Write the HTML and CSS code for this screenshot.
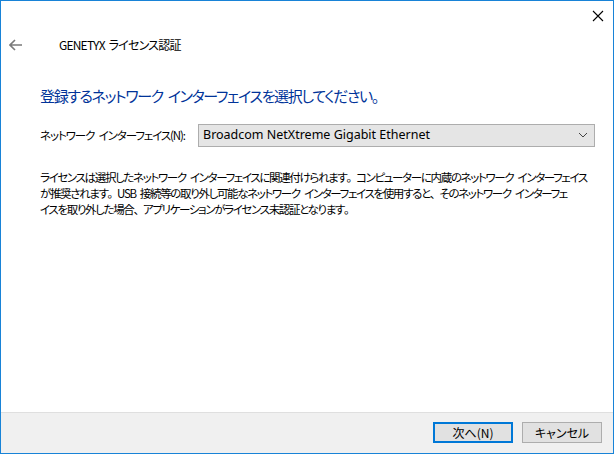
FILE: index.html
```html
<!DOCTYPE html>
<html lang="ja">
<head>
<meta charset="utf-8">
<title>GENETYX ライセンス認証</title>
<link rel="stylesheet" href="styles.css">
</head>
<body>
<div class="window">
  <div class="titlebar">
    <span class="close" aria-label="閉じる">
      <svg width="12" height="12" viewBox="0 0 12 12"><path d="M1 1 L11 11 M11 1 L1 11" stroke="#000" stroke-width="1.1" fill="none"/></svg>
    </span>
  </div>
  <div class="header">
    <span class="back">
      <svg width="14" height="12" viewBox="0 0 14 12"><path d="M1 6 H13 M6 1 L1 6 L6 11" stroke="#7a7a7a" stroke-width="1.6" fill="none"/></svg>
    </span>
    <span class="apptitle">GENETYX ライセンス認証</span>
  </div>
  <div class="content">
    <h1 class="instruction">登録するネットワーク インターフェイスを選択してください。</h1>
    <div class="field">
      <label class="field-label">ネットワーク インターフェイス(N):</label>
      <div class="combo">
        <span class="combo-text">Broadcom NetXtreme Gigabit Ethernet</span>
        <svg class="chev" width="10" height="6" viewBox="0 0 10 6"><path d="M1 1 L5 5 L9 1" stroke="#444" stroke-width="1" fill="none"/></svg>
      </div>
    </div>
    <p class="desc">ライセンスは選択したネットワーク インターフェイスに関連付けられます<span class="fw">。</span>コンピューターに内蔵のネットワーク インターフェイス<br>が推奨されます<span class="fw">。</span>USB 接続等の取り外し可能なネットワーク インターフェイスを使用すると<span class="fw">、</span>そのネットワーク インターフェ<br>イスを取り外した場合<span class="fw">、</span>アプリケーションがライセンス未認証となります<span class="fw">。</span></p>
  </div>
  <div class="footer">
    <button class="btn btn-default">次へ(N)</button>
    <button class="btn">キャンセル</button>
  </div>
</div>
</body>
</html>
```
FILE: styles.css
```css
* { box-sizing: border-box; }
html, body { margin: 0; padding: 0; background: #fff; }
body {
  font-family: "Noto Sans CJK JP", sans-serif;
  font-feature-settings: "palt";
  font-size: 12px;
  color: #000;
}
.window {
  width: 614px;
  height: 454px;
  border: 1px solid #1883d7;
  display: flex;
  flex-direction: column;
  background: #fff;
  overflow: hidden;
}
.titlebar {
  height: 30px;
  display: flex;
  justify-content: flex-end;
  align-items: center;
  padding-right: 9px;
}
.close { display: flex; width: 12px; height: 12px; }
.header {
  height: 28px;
  display: flex;
  align-items: center;
}
.back {
  display: flex;
  width: 14px;
  margin-left: 8px;
}
.apptitle {
  margin-left: 36px;
  font-size: 12px;
  letter-spacing: -0.8px;
  word-spacing: 2px;
  line-height: 16px;
}
.content {
  flex: 1;
  padding-left: 39px;
  padding-right: 10px;
}
.instruction {
  margin: 26px 0 0 0;
  font-weight: normal;
  font-size: 15px;
  line-height: 22px;
  color: #003399;
  letter-spacing: -1.35px;
  word-spacing: 3px;
  white-space: nowrap;
}
.field {
  margin-top: 17px;
  display: flex;
  align-items: center;
  height: 22px;
}
.field-label {
  width: 158px;
  flex: none;
  font-size: 11.5px;
  letter-spacing: -1.1px;
  word-spacing: 3px;
  white-space: nowrap;
}
.combo {
  width: 397px;
  height: 23px;
  background: #e5e5e5;
  border: 1px solid #adadad;
  display: flex;
  align-items: center;
  justify-content: space-between;
  padding: 0 6px 0 4px;
}
.combo-text {
  font-family: "Noto Sans", sans-serif;
  font-feature-settings: normal;
  font-size: 12.5px;
  letter-spacing: 0;
  word-spacing: 0;
  line-height: 16px;
}
.chev { display: block; }
.desc {
  margin: 23px 0 0 0;
  font-size: 11.5px;
  line-height: 16px;
  letter-spacing: -1.35px;
  word-spacing: 3px;
  white-space: nowrap;
}
.fw {
  font-feature-settings: normal;
  letter-spacing: -2px;
}
.footer {
  height: 41px;
  border-top: 1px solid #dfdfdf;
  background: #f0f0f0;
  display: flex;
  justify-content: flex-end;
  align-items: flex-start;
  gap: 9px;
  padding: 9px 11px 0 0;
}
.btn {
  width: 80px;
  height: 21px;
  background: #e1e1e1;
  border: 1px solid #adadad;
  font-family: "Noto Sans CJK JP", sans-serif;
  font-feature-settings: "palt";
  font-size: 12px;
  line-height: 15px;
  color: #000;
  padding: 0;
}
.btn-default {
  border: 2px solid #0078d7;
}
```
